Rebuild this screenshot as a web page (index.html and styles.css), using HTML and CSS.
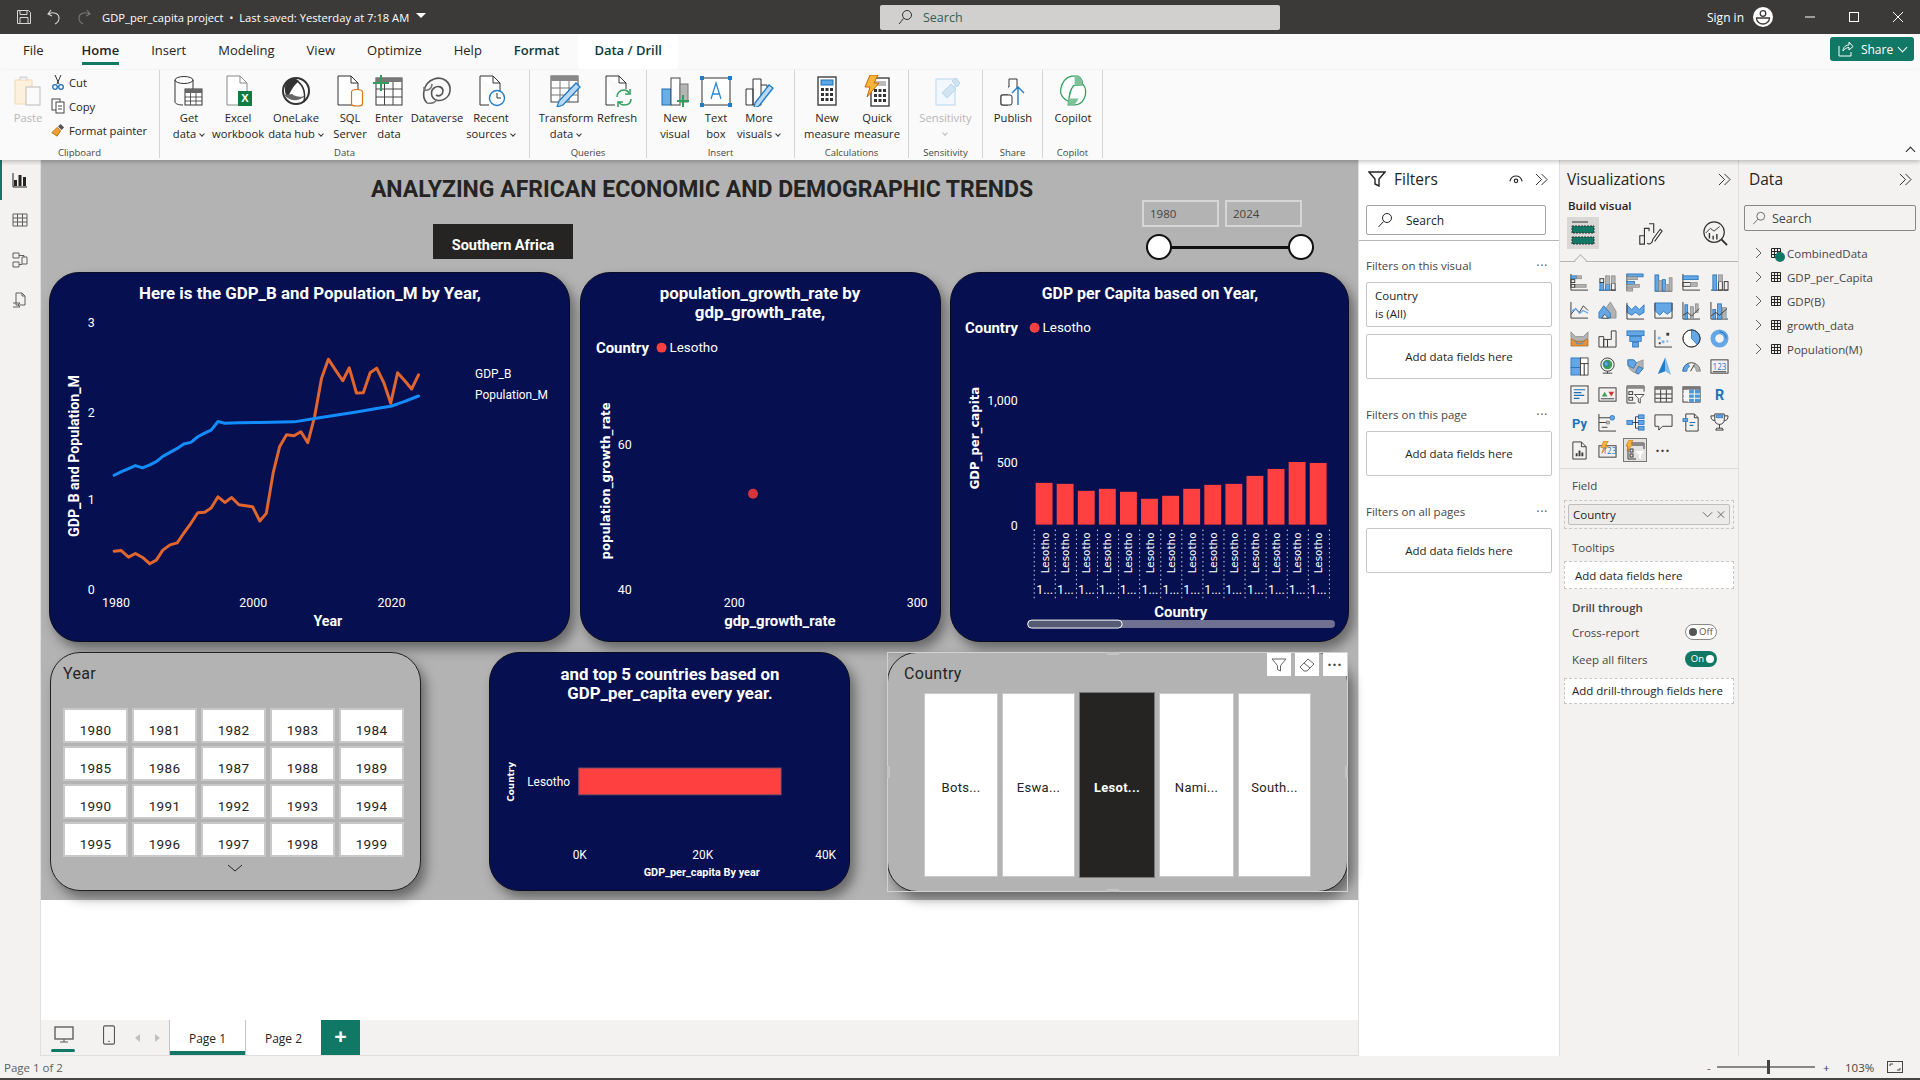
FILE: index.html
```html
<!DOCTYPE html>
<html lang="en">
<head>
<meta charset="utf-8">
<title>GDP_per_capita project</title>
<link rel="stylesheet" href="styles.css">
</head>
<body>
<div class="app">
<header class="titlebar">
  <svg class="tb-ic" viewBox="0 0 16 16"><path d="M1.5 1.5h11l2 2v11h-13z M4 1.5v4h7v-4 M4 14.5v-6h8v6" fill="none" stroke="#d8d6d4"/></svg>
  <svg class="tb-ic" viewBox="0 0 16 16"><path d="M5 1L2 5l4 2 M2.5 5C7 2.5 13 4 13 9c0 3-2 5-4 6" fill="none" stroke="#d8d6d4" stroke-width="1.1"/></svg>
  <svg class="tb-ic" viewBox="0 0 16 16"><path d="M11 1l3 4-4 2 M13.500 5C9 2.500 3 4 3 9c0 3 2 5 4 6" fill="none" stroke="#7a7876" stroke-width="1.1"/></svg>
  <span class="doc-name">GDP_per_capita project &nbsp;•&nbsp; Last saved: Yesterday at 7:18 AM</span>
  <span class="doc-caret"></span>
  <div class="tb-search">
    <svg class="tb-search-ic" viewBox="0 0 16 16"><circle cx="10" cy="6" r="4.500" fill="none" stroke="#333"/><path d="M6.500 9.500L2 15" stroke="#333"/></svg>
    <span>Search</span>
  </div>
  <span class="signin">Sign in</span>
  <svg class="avatar" viewBox="0 0 20 20"><circle cx="10" cy="10" r="10" fill="#fff"/><circle cx="10" cy="6.500" r="2.800" fill="none" stroke="#3b3a39" stroke-width="1.300"/><path d="M3.500 11h13c0 3.500-3 6-6.500 6s-6.500-2.500-6.500-6z" fill="none" stroke="#3b3a39" stroke-width="1.300"/></svg>
  <svg class="win-ic" viewBox="0 0 12 12"><path d="M1 6h10" stroke="#fff"/></svg>
  <svg class="win-ic" viewBox="0 0 12 12"><rect x="1.500" y="1.500" width="9" height="9" fill="none" stroke="#fff"/></svg>
  <svg class="win-ic" viewBox="0 0 12 12"><path d="M1 1l10 10M11 1L1 11" stroke="#fff"/></svg>
</header>

<nav class="tabs">
  <span class="tab tab-file">File</span>
  <span class="tab tab-active">Home</span>
  <span class="tab">Insert</span>
  <span class="tab">Modeling</span>
  <span class="tab">View</span>
  <span class="tab">Optimize</span>
  <span class="tab">Help</span>
  <span class="tab tab-ctx">Format</span>
  <span class="tab tab-ctx tab-white">Data / Drill</span>
  <button class="share">
    <svg class="share-ic" viewBox="0 0 16 16"><path d="M1 5v10h12v-4" fill="none" stroke="#fff"/><path d="M5 10c0-4 3-6 6-6V1l4 4.500L11 9V6.500C8.500 6.500 6 8 5 10z" fill="none" stroke="#fff"/></svg>
    Share <span class="cv-white"></span>
  </button>
</nav>

<section class="ribbon">
  <div class="grp g-clip">
    <div class="grp-body">
      <div class="rb rb-paste">
        <svg class="rb-ic" viewBox="0 0 32 32"><path d="M3 5h17v24H3z" fill="#fdf1dd" stroke="#f0d8b0"/><path d="M8 5V2h7v3" fill="#eee" stroke="#ccc"/><rect x="14" y="12" width="14" height="18" fill="#fafafa" stroke="#bbb"/></svg>
        <span class="rb-t dim">Paste</span>
      </div>
      <div class="clip-list">
        <div class="clip-item"><svg class="clip-ic" viewBox="0 0 14 16"><path d="M4 1l4 9M10 1L6 10" stroke="#333"/><circle cx="4" cy="13" r="2.300" fill="none" stroke="#1e6eb5" stroke-width="1.300"/><circle cx="10" cy="13" r="2.300" fill="none" stroke="#1e6eb5" stroke-width="1.300"/></svg>Cut</div>
        <div class="clip-item"><svg class="clip-ic" viewBox="0 0 14 16"><rect x="1" y="1" width="8" height="11" fill="#fff" stroke="#444"/><rect x="5" y="4" width="8" height="11" fill="#fff" stroke="#444"/><path d="M7 8h4M7 11h4" stroke="#444"/></svg>Copy</div>
        <div class="clip-item"><svg class="clip-ic" viewBox="0 0 16 16"><path d="M1 11l6-6 4 4-4 6z" fill="#f0a030" stroke="#b06a10"/><path d="M8 4l3-3 4 4-3 3z" fill="#555"/></svg>Format painter</div>
      </div>
    </div>
    <div class="grp-name">Clipboard</div>
  </div>

  <div class="grp g-data">
    <div class="grp-body">
      <div class="rb w50">
        <svg class="rb-ic" viewBox="0 0 32 32"><ellipse cx="11" cy="5" rx="9" ry="3.500" fill="#fff" stroke="#333"/><path d="M2 5v22c0 1.500 3 3 8 3" fill="none" stroke="#333"/><path d="M20 5v9" stroke="#333"/><rect x="12" y="14" width="17" height="16" fill="#fff" stroke="#333"/><rect x="12" y="14" width="17" height="4" fill="#666"/><path d="M17.500 18v12M23 18v12M12 22h17M12 26h17" stroke="#333" stroke-width=".8"/></svg>
        <span class="rb-t">Get<br>data<i class="cv"></i></span>
      </div>
      <div class="rb w48">
        <svg class="rb-ic" viewBox="0 0 32 32"><path d="M5 1h13l7 7v22H5z" fill="#fff" stroke="#888"/><path d="M18 1v7h7" fill="none" stroke="#888"/><rect x="16" y="16" width="14" height="15" fill="#107c41"/><text class="x-t" x="23" y="27" text-anchor="middle">X</text></svg>
        <span class="rb-t">Excel<br>workbook</span>
      </div>
      <div class="rb w68">
        <svg class="rb-ic" viewBox="0 0 32 32"><circle cx="16" cy="16" r="13" fill="#fff" stroke="#333" stroke-width="2"/><path d="M7 6c-3 4-3 13 1 17 2-6 5-12 11-17-4-3-9-3-12 0z" fill="#333"/><path d="M4 20c6 6 14 8 22 0-4 3-10 2-14-1z" fill="#666"/><path d="M14 4c8 4 12 12 10 23" fill="none" stroke="#333" stroke-width="1.500"/></svg>
        <span class="rb-t">OneLake<br>data hub<i class="cv"></i></span>
      </div>
      <div class="rb w40">
        <svg class="rb-ic" viewBox="0 0 32 32"><path d="M4 1h13l7 7v22H4z" fill="#fff" stroke="#333"/><path d="M17 1v7h7" fill="none" stroke="#333"/><ellipse cx="23" cy="17" rx="5.500" ry="2.500" fill="#fff" stroke="#d8730f" stroke-width="1.200"/><path d="M17.500 17v12c0 1 2 2 5.500 2s5.500-1 5.500-2V17" fill="#fff" stroke="#d8730f" stroke-width="1.200"/></svg>
        <span class="rb-t">SQL<br>Server</span>
      </div>
      <div class="rb w38">
        <svg class="rb-ic" viewBox="0 0 32 32"><rect x="3" y="3" width="26" height="27" fill="#fff" stroke="#333"/><rect x="3" y="3" width="26" height="4" fill="#777"/><path d="M11.500 7v23M20 7v23M3 14h26M3 22h26" stroke="#444"/><path d="M8 0v16M0 8h16" stroke="#2f9e5a" stroke-width="2"/></svg>
        <span class="rb-t">Enter<br>data</span>
      </div>
      <div class="rb w58">
        <svg class="rb-ic" viewBox="0 0 32 32"><path d="M6 28C0 22 2 8 13 4c9-3 17 3 16 12-1 7-8 11-14 9-5-2-6-9-2-12 4-3 9-1 9 3s-4 6-7 4" fill="none" stroke="#555" stroke-width="1.600"/><path d="M6 28c5 1 10-1 9-4M3 12c-1 6 8 3 8-3" fill="none" stroke="#777" stroke-width="1.600"/></svg>
        <span class="rb-t">Dataverse</span>
      </div>
      <div class="rb w50">
        <svg class="rb-ic" viewBox="0 0 32 32"><path d="M5 1h13l7 7v14M14 30H5V1" fill="#fff" stroke="#333"/><path d="M18 1v7h7" fill="none" stroke="#333"/><circle cx="22" cy="23" r="7.500" fill="#fff" stroke="#1e7cc8" stroke-width="1.400"/><path d="M22 18v5h4" fill="none" stroke="#333"/></svg>
        <span class="rb-t">Recent<br>sources<i class="cv"></i></span>
      </div>
    </div>
    <div class="grp-name">Data</div>
  </div>

  <div class="grp g-query">
    <div class="grp-body">
      <div class="rb w64">
        <svg class="rb-ic" viewBox="0 0 32 32"><rect x="1" y="1" width="27" height="26" fill="#fff" stroke="#444"/><rect x="1" y="1" width="27" height="5" fill="#888"/><path d="M10 6v21M19 6v21M1 13h27M1 20h27" stroke="#777"/><path d="M9 26L26 8l4 4L13 30l-6 2z" fill="#b8d8f4" stroke="#1e7cc8" stroke-width="1.300"/></svg>
        <span class="rb-t">Transform<br>data<i class="cv"></i></span>
      </div>
      <div class="rb w38">
        <svg class="rb-ic" viewBox="0 0 32 32"><path d="M5 1h13l7 7v6M14 30H5V1" fill="#fff" stroke="#333"/><path d="M18 1v7h7" fill="none" stroke="#333"/><path d="M16 22c0-4 3-7 7-7 2 0 4 1 5 3M30 24c0 4-3 6-7 6-2 0-4-1-5-3" fill="none" stroke="#2f9e5a" stroke-width="1.500"/><path d="M29 14v5h-5M17 32v-5h5" fill="none" stroke="#2f9e5a" stroke-width="1.500"/></svg>
        <span class="rb-t">Refresh</span>
      </div>
    </div>
    <div class="grp-name">Queries</div>
  </div>

  <div class="grp g-insert">
    <div class="grp-body">
      <div class="rb w44">
        <svg class="rb-ic" viewBox="0 0 32 32"><rect x="3" y="14" width="9" height="16" fill="#6aaee8" stroke="#1e6eb5"/><rect x="12" y="3" width="9" height="27" fill="#fff" stroke="#444"/><rect x="21" y="9" width="8" height="18" fill="#b5b5b5" stroke="#777"/><path d="M24 20v12M18 26h12" stroke="#2f9e5a" stroke-width="2"/></svg>
        <span class="rb-t">New<br>visual</span>
      </div>
      <div class="rb w38">
        <svg class="rb-ic" viewBox="0 0 32 32"><rect x="2" y="3" width="28" height="27" fill="#fff" stroke="#333"/><path d="M11 24L16 8l5 16M12.500 19h7" fill="none" stroke="#2d8ad8" stroke-width="1.300"/><g fill="#1e7cc8"><rect y="1" width="4" height="4"/><rect x="28" y="1" width="4" height="4"/><rect y="28" width="4" height="4"/><rect x="28" y="28" width="4" height="4"/></g></svg>
        <span class="rb-t">Text<br>box</span>
      </div>
      <div class="rb w48">
        <svg class="rb-ic" viewBox="0 0 32 32"><path d="M3 14h7v16H3zM10 4h8v26h-8zM18 10h6v4" fill="#fff" stroke="#333"/><path d="M12 28L26 10l4 3L16 31l-5 2z" fill="#b8d8f4" stroke="#1e7cc8" stroke-width="1.300"/></svg>
        <span class="rb-t">More<br>visuals<i class="cv"></i></span>
      </div>
    </div>
    <div class="grp-name">Insert</div>
  </div>

  <div class="grp g-calc">
    <div class="grp-body">
      <div class="rb w56">
        <svg class="rb-ic" viewBox="0 0 32 32"><rect x="7" y="2" width="18" height="28" fill="#fff" stroke="#333" stroke-width="1.300"/><rect x="10" y="5" width="12" height="5" fill="#5aa7e6" stroke="#1e6eb5"/><g fill="#333"><rect x="10" y="13" width="3" height="3"/><rect x="14.500" y="13" width="3" height="3"/><rect x="19" y="13" width="3" height="3"/><rect x="10" y="18" width="3" height="3"/><rect x="14.500" y="18" width="3" height="3"/><rect x="19" y="18" width="3" height="3"/><rect x="10" y="23" width="3" height="3"/><rect x="14.500" y="23" width="3" height="3"/><rect x="19" y="23" width="3" height="3"/></g></svg>
        <span class="rb-t">New<br>measure</span>
      </div>
      <div class="rb w44">
        <svg class="rb-ic" viewBox="0 0 32 32"><rect x="10" y="3" width="18" height="28" fill="#fff" stroke="#333" stroke-width="1.300"/><rect x="13" y="6" width="12" height="5" fill="#bbb"/><g fill="#333"><rect x="13" y="14" width="3" height="3"/><rect x="17.500" y="14" width="3" height="3"/><rect x="22" y="14" width="3" height="3"/><rect x="13" y="19" width="3" height="3"/><rect x="17.500" y="19" width="3" height="3"/><rect x="22" y="19" width="3" height="3"/><rect x="13" y="24" width="3" height="3"/><rect x="17.500" y="24" width="3" height="3"/><rect x="22" y="24" width="3" height="3"/></g><path d="M9 0h8l-4 8h5L6 22l3-10H4z" fill="#f5b53a" stroke="#c8650a"/></svg>
        <span class="rb-t">Quick<br>measure</span>
      </div>
    </div>
    <div class="grp-name">Calculations</div>
  </div>

  <div class="grp g-sens">
    <div class="grp-body">
      <div class="rb w74">
        <svg class="rb-ic" viewBox="0 0 32 32"><rect x="6" y="4" width="19" height="26" fill="#f2f8fd" stroke="#b5d8f0"/><path d="M12 18l9-9 5 5-9 9z" fill="#d0e4f2" stroke="#b5d8f0"/><path d="M22 6l4-3 4 5-3 4z" fill="#d0e4f2" stroke="#b5d8f0"/></svg>
        <span class="rb-t dim">Sensitivity<br><i class="cv cv-center"></i></span>
      </div>
    </div>
    <div class="grp-name">Sensitivity</div>
  </div>

  <div class="grp g-share">
    <div class="grp-body">
      <div class="rb w60">
        <svg class="rb-ic" viewBox="0 0 32 32"><path d="M4 20h7v10H4zM11 12h1V4h8v10" fill="#fff" stroke="#333"/><rect x="4" y="20" width="11" height="10" rx="2" fill="#fff" stroke="#333"/><path d="M21 30V12M15 18l6-6 6 6" fill="none" stroke="#1e7cc8" stroke-width="1.400"/></svg>
        <span class="rb-t">Publish</span>
      </div>
    </div>
    <div class="grp-name">Share</div>
  </div>

  <div class="grp g-copilot">
    <div class="grp-body">
      <div class="rb w60">
        <svg class="rb-ic" viewBox="2 1 27 30"><path d="M4 14C5 8 9 3 14 2h6c4 2 5 6 4 9l-8 1c-3 4-4 8-4 14C6 24 3 19 4 14z" fill="#fff" stroke="#2f9e5a" stroke-width="1.200"/><path d="M16 11l9-1c3 3 3 9 1 13-2 4-5 6-9 6h-6c1-8 1-13 5-18z" fill="#fff" stroke="#2f9e5a" stroke-width="1.200"/><path d="M17 2h3c4 2 5 6 4 9l-7 0z" fill="#7fc19a"/><path d="M11 23h10l-4 6h-6z" fill="#7fc19a"/></svg>
        <span class="rb-t">Copilot</span>
      </div>
    </div>
    <div class="grp-name">Copilot</div>
  </div>
  <span class="collapse"></span>
</section>

<div class="main">
  <aside class="rail">
    <div class="rail-item rail-on"><svg class="rail-ic" viewBox="0 0 16 16"><rect x="2" y="8" width="3" height="6" fill="#252423"/><rect x="6.500" y="3" width="3" height="11" fill="#252423"/><rect x="11" y="5" width="3" height="9" fill="#252423"/><path d="M1 1v14h14" fill="none" stroke="#252423"/></svg></div>
    <div class="rail-item"><svg class="rail-ic" viewBox="0 0 16 16"><path d="M1 2h14v12H1zM1 6h14M1 10h14M5.500 2v12M10.500 2v12" fill="none" stroke="#605e5c"/></svg></div>
    <div class="rail-item"><svg class="rail-ic" viewBox="0 0 16 16"><path d="M1 1h6v5H1zM1 10h6v5H1zM10 5h5v7h-5zM7 3.500h5V5M7 12.500h3" fill="none" stroke="#605e5c"/></svg></div>
    <div class="rail-item"><svg class="rail-ic" viewBox="0 0 16 16"><path d="M4 1h6l3 3v9H4zM10 1v3h3" fill="none" stroke="#605e5c"/><path d="M1 11h7l-2 2 2 2H1" fill="none" stroke="#605e5c"/></svg></div>
  </aside>

  <div class="workspace">
    <div class="canvas">
      <div class="canvas-head">
        <h1 class="report-title">ANALYZING AFRICAN ECONOMIC AND DEMOGRAPHIC TRENDS</h1>
        <div class="region-btn">Southern Africa</div>
        <div class="range">
          <div class="range-inputs"><span class="range-in">1980</span><span class="range-in">2024</span></div>
          <div class="range-track"><span class="handle"></span><span class="handle"></span></div>
        </div>
      </div>

      <div class="row row-top">
        <div class="card c-line">
          <svg class="chart" viewBox="49 272 521 370">
            <text class="t-title" x="310" y="292" text-anchor="middle">Here is the GDP_B and Population_M by Year,</text>
            <text class="t-ax" x="90" y="322" text-anchor="middle">3</text>
            <text class="t-ax" x="90" y="412" text-anchor="middle">2</text>
            <text class="t-ax" x="90" y="500" text-anchor="middle">1</text>
            <text class="t-ax" x="90" y="590" text-anchor="middle">0</text>
            <text class="t-ax" x="115" y="603" text-anchor="middle">1980</text>
            <text class="t-ax" x="253" y="603" text-anchor="middle">2000</text>
            <text class="t-ax" x="392" y="603" text-anchor="middle">2020</text>
            <text class="t-axt" x="328" y="622" text-anchor="middle">Year</text>
            <text class="t-axt" text-anchor="middle" transform="translate(73 456) rotate(-90)">GDP_B and Population_M</text>
            <text class="t-ax t-lg" x="476" y="374">GDP_B</text>
            <text class="t-ax t-lg" x="476" y="395">Population_M</text>
            <svg x="49" y="272" width="521" height="370" viewBox="26 37 1512 1110" preserveAspectRatio="none">
              <polyline class="ln ln-or" vector-effect="non-scaling-stroke" points="212,876 232,874 254,894 274,883 295,895 316,914 335,903 354,873 375,857 396,851 415,822 436,792 456,760 476,759 495,746 515,712 535,729 555,714 576,736 596,739 616,742 637,785 656,762 676,640 695,560 715,525 737,528 757,516 777,549 797,470 817,355 837,297 858,330 879,362 898,323 919,399 939,398 959,338 978,324 999,368 1019,430 1039,338 1060,362 1080,387 1100,344"/>
              <polyline class="ln ln-bl" vector-effect="non-scaling-stroke" points="212,647 232,637 254,627 274,618 295,625 316,616 335,606 354,590 375,578 396,566 415,553 436,548 456,531 476,520 495,511 515,485 535,490 576,489 637,488 737,486 797,476 858,466 919,456 978,446 1019,439 1039,432 1060,424 1100,408"/>
            </svg>
          </svg>
        </div>

        <div class="card c-scatter">
          <svg class="chart" viewBox="580 272 361 370">
            <text class="t-title" x="760" y="292" text-anchor="middle">population_growth_rate by</text>
            <text class="t-title" x="760" y="311" text-anchor="middle">gdp_growth_rate,</text>
            <text class="t-leg-h" x="595" y="347">Country</text>
            <circle class="dot" cx="661" cy="347" r="5"/>
            <text class="t-leg" x="669" y="347">Lesotho</text>
            <text class="t-wide" text-anchor="middle" transform="translate(605 481) rotate(-90)">population_growth_rate</text>
            <text class="t-ax" x="617" y="444">60</text>
            <text class="t-ax" x="617" y="590">40</text>
            <text class="t-ax" x="734" y="603" text-anchor="middle">200</text>
            <text class="t-ax" x="918" y="603" text-anchor="middle">300</text>
            <circle class="dot dot-data" cx="753" cy="494" r="5"/>
            <text class="t-leg-h" x="780" y="622" text-anchor="middle">gdp_growth_rate</text>
          </svg>
        </div>

        <div class="card c-bars">
          <svg class="chart" viewBox="950 272 399 370">
            <text class="t-title t-title-sm" x="1150" y="293" text-anchor="middle">GDP per Capita based on Year,</text>
            <text class="t-leg-h" x="964" y="327">Country</text>
            <circle class="dot" cx="1034" cy="327" r="5"/>
            <text class="t-leg" x="1042" y="327">Lesotho</text>
            <text class="t-wide" text-anchor="middle" transform="translate(974 438) rotate(-90)">GDP_per_capita</text>
            <text class="t-ax" x="1017" y="400" text-anchor="end">1,000</text>
            <text class="t-ax" x="1017" y="463" text-anchor="end">500</text>
            <text class="t-ax" x="1017" y="526" text-anchor="end">0</text>
            <g class="bars">
              <rect x="1035" y="483" width="17" height="42"/><rect x="1056.200" y="484" width="17" height="41"/><rect x="1077.400" y="491" width="17" height="34"/><rect x="1098.600" y="489" width="17" height="36"/><rect x="1119.800" y="492" width="17" height="33"/><rect x="1141" y="499" width="17" height="26"/><rect x="1162.200" y="496" width="17" height="29"/><rect x="1183.400" y="489" width="17" height="36"/><rect x="1204.600" y="485" width="17" height="40"/><rect x="1225.800" y="484" width="17" height="41"/><rect x="1247" y="476" width="17" height="49"/><rect x="1268.200" y="469" width="17" height="56"/><rect x="1289.400" y="462" width="17" height="63"/><rect x="1310.600" y="463" width="17" height="62"/>
            </g>
            <g class="seps">
              <path d="M1033.600 530V600M1054.800 530V600M1076 530V600M1097.200 530V600M1118.400 530V600M1139.600 530V600M1160.800 530V600M1182 530V600M1203.200 530V600M1224.400 530V600M1245.600 530V600M1266.800 530V600M1288 530V600M1309.200 530V600M1330.400 530V600"/>
            </g>
            <g class="t-cat">
              <text transform="translate(1044 574) rotate(-90)">Lesotho</text><text transform="translate(1065 574) rotate(-90)">Lesotho</text><text transform="translate(1086 574) rotate(-90)">Lesotho</text><text transform="translate(1107 574) rotate(-90)">Lesotho</text><text transform="translate(1128 574) rotate(-90)">Lesotho</text><text transform="translate(1150 574) rotate(-90)">Lesotho</text><text transform="translate(1171 574) rotate(-90)">Lesotho</text><text transform="translate(1192 574) rotate(-90)">Lesotho</text><text transform="translate(1213 574) rotate(-90)">Lesotho</text><text transform="translate(1234 574) rotate(-90)">Lesotho</text><text transform="translate(1256 574) rotate(-90)">Lesotho</text><text transform="translate(1277 574) rotate(-90)">Lesotho</text><text transform="translate(1298 574) rotate(-90)">Lesotho</text><text transform="translate(1319 574) rotate(-90)">Lesotho</text>
            </g>
            <g class="t-ax t-mid">
              <text x="1044" y="590">1...</text><text x="1065" y="590">1...</text><text x="1086" y="590">1...</text><text x="1107" y="590">1...</text><text x="1128" y="590">1...</text><text x="1150" y="590">1...</text><text x="1171" y="590">1...</text><text x="1192" y="590">1...</text><text x="1213" y="590">1...</text><text x="1234" y="590">1...</text><text x="1256" y="590">1...</text><text x="1277" y="590">1...</text><text x="1298" y="590">1...</text><text x="1319" y="590">1...</text>
            </g>
            <text class="t-leg-h" x="1181" y="613" text-anchor="middle">Country</text>
            <rect class="sb-track" x="1027" y="621" width="309" height="8" rx="4"/>
            <rect class="sb-thumb" x="1027" y="621" width="95" height="8" rx="4"/>
          </svg>
        </div>
      </div>

      <div class="row row-bottom">
        <div class="slicer s-year">
          <div class="slicer-title">Year</div>
          <div class="year-grid">
            <span class="yr">1980</span><span class="yr">1981</span><span class="yr">1982</span><span class="yr">1983</span><span class="yr">1984</span>
            <span class="yr">1985</span><span class="yr">1986</span><span class="yr">1987</span><span class="yr">1988</span><span class="yr">1989</span>
            <span class="yr">1990</span><span class="yr">1991</span><span class="yr">1992</span><span class="yr">1993</span><span class="yr">1994</span>
            <span class="yr">1995</span><span class="yr">1996</span><span class="yr">1997</span><span class="yr">1998</span><span class="yr">1999</span>
          </div>
          <svg class="yr-more" viewBox="0 0 16 8"><path d="M1 1l7 6 7-6" fill="none" stroke="#252423"/></svg>
        </div>

        <div class="card c-top5">
          <svg class="chart" viewBox="489 652 361 239">
            <text class="t-title" x="670" y="673" text-anchor="middle">and top 5 countries based on</text>
            <text class="t-title" x="670" y="692" text-anchor="middle">GDP_per_capita every year.</text>
            <text class="t-wide-sm" text-anchor="middle" transform="translate(510 782) rotate(-90)">Country</text>
            <text class="t-ax-sm" x="526" y="782">Lesotho</text>
            <rect class="bar-top" x="578" y="768" width="204" height="27"/>
            <text class="t-ax-sm" x="579" y="856" text-anchor="middle">0K</text>
            <text class="t-ax-sm" x="703" y="856" text-anchor="middle">20K</text>
            <text class="t-ax-sm" x="827" y="856" text-anchor="middle">40K</text>
            <text class="t-sub" x="702" y="873" text-anchor="middle">GDP_per_capita By year</text>
          </svg>
        </div>

        <div class="slicer s-country">
          <div class="slicer-title st-country">Country</div>
          <div class="country-grid">
            <span class="cb">Bots...</span><span class="cb">Eswa...</span><span class="cb cb-on">Lesot...</span><span class="cb">Nami...</span><span class="cb">South...</span>
          </div>
          <div class="sel-frame">
            <i class="grip g-t"></i><i class="grip g-b"></i><i class="grip g-l"></i><i class="grip g-r"></i>
          </div>
          <div class="vis-tools">
            <span class="vt"><svg class="vt-ic" viewBox="0 0 16 16"><path d="M1 2h14l-5.500 6.500V14L6.500 12.500V8.500z" fill="none" stroke="#666"/></svg></span>
            <span class="vt"><svg class="vt-ic" viewBox="0 0 16 16"><path d="M1 10l8-8 6 5-7 7H5z" fill="none" stroke="#666"/><path d="M5 6l6 5" stroke="#666"/></svg></span>
            <span class="vt vt-dots">···</span>
          </div>
        </div>
      </div>
    </div>

    <div class="blank"></div>

    <div class="pagebar">
      <span class="pb-view pb-view-on"><svg class="pb-ic" viewBox="0 0 20 18"><rect x="1" y="1" width="18" height="12" fill="none" stroke="#555" stroke-width="1.300"/><path d="M10 13v3M6 16h8" stroke="#555"/></svg></span>
      <span class="pb-view"><svg class="pb-ic" viewBox="0 0 14 22"><rect x="1" y="1" width="12" height="20" rx="1.500" fill="none" stroke="#555" stroke-width="1.200"/><path d="M6 18h2" stroke="#555"/></svg></span>
      <span class="pb-arrow pb-left"></span>
      <span class="pb-arrow pb-right"></span>
      <span class="page page-on">Page 1</span>
      <span class="page">Page 2</span>
      <span class="page-add">+</span>
    </div>
  </div>

  <aside class="filters">
    <div class="pane-head">
      <svg class="pane-f" viewBox="0 0 18 16"><path d="M1 1h16l-6 7v7l-4-2V8z" fill="none" stroke="#252423" stroke-width="1.400"/></svg>
      <span class="pane-title">Filters</span>
      <svg class="eye" viewBox="0 0 16 10"><path d="M1 7c2-8 12-8 14 0" fill="none" stroke="#252423" stroke-width="1.300"/><circle cx="8" cy="6.500" r="2" fill="none" stroke="#252423" stroke-width="1.300"/></svg>
      <svg class="dbl" viewBox="0 0 14 14"><path d="M1 1l6 6-6 6M7 1l6 6-6 6" fill="none" stroke="#252423"/></svg>
    </div>
    <div class="f-search">
      <svg class="s-ic" viewBox="0 0 16 16"><circle cx="10" cy="6" r="4.500" fill="none" stroke="#252423"/><path d="M6.500 9.500L1.500 15" stroke="#252423"/></svg>
      <span>Search</span>
    </div>
    <div class="f-rule"></div>
    <div class="f-section">
      <div class="f-head"><span>Filters on this visual</span><span class="f-dots">···</span></div>
      <div class="f-card"><span>Country</span><span>is (All)</span></div>
      <div class="f-add">Add data fields here</div>
    </div>
    <div class="f-section">
      <div class="f-head"><span>Filters on this page</span><span class="f-dots">···</span></div>
      <div class="f-add">Add data fields here</div>
    </div>
    <div class="f-section">
      <div class="f-head"><span>Filters on all pages</span><span class="f-dots">···</span></div>
      <div class="f-add">Add data fields here</div>
    </div>
  </aside>

  <aside class="viz">
    <div class="viz-head">
      <span class="pane-title">Visualizations</span>
      <svg class="dbl" viewBox="0 0 14 14"><path d="M1 1l6 6-6 6M7 1l6 6-6 6" fill="none" stroke="#252423"/></svg>
    </div>
    <div class="build">Build visual</div>
    <div class="viz-tabs">
      <span class="vtab-on"><svg class="vtab-ic" viewBox="0 0 28 28"><path d="M3 3h16" stroke="#333"/><rect x="3" y="7" width="22" height="7" fill="#117865" stroke="#333" stroke-dasharray="2 1"/><rect x="3" y="18" width="22" height="7" fill="#117865" stroke="#333" stroke-dasharray="2 1"/></svg></span>
      <svg class="vtab-2" viewBox="0 0 28 28"><path d="M3 17h5v9H3zM8 17V9h5v3M13 4h5v10" fill="none" stroke="#333" stroke-width="1.200"/><path d="M11 25c3 2 6-1 6-4L25 10l2 2-8 11" fill="#fff" stroke="#333" stroke-width="1.200"/></svg>
      <svg class="vtab-3" viewBox="0 0 28 28"><circle cx="13" cy="13" r="11" fill="none" stroke="#333" stroke-width="1.300"/><path d="M4 14l5-5 4 3 6-5" fill="none" stroke="#333"/><path d="M8 20v-6M12 21v-4M16 21v-6" stroke="#333" stroke-width="1.500"/><path d="M21 21l6 6" stroke="#333" stroke-width="2"/></svg>
    </div>
    <div class="viz-rule"><i class="notch"></i></div>
    <div class="viz-grid">
      <svg class="vi" viewBox="0 0 20 20"><path class="l" d="M1 1v17h18"/><rect class="b" x="1" y="3" width="6" height="3"/><rect class="g" x="7" y="3" width="5" height="3"/><rect class="l" x="1" y="7" width="4" height="3"/><rect class="g" x="5" y="12" width="12" height="3"/><rect class="l" x="1" y="12" width="4" height="3"/></svg>
      <svg class="vi" viewBox="0 0 20 20"><path class="l" d="M1 18h18"/><rect class="b" x="2" y="10" width="4" height="8"/><rect class="l" x="2" y="6" width="4" height="4"/><rect class="b" x="8" y="12" width="4" height="6"/><rect class="g" x="8" y="3" width="4" height="9"/><rect class="l" x="14" y="11" width="4" height="7"/><rect class="g" x="14" y="3" width="4" height="8"/></svg>
      <svg class="vi" viewBox="0 0 20 20"><path class="l" d="M1 1v18"/><rect class="b" x="1" y="1" width="17" height="3"/><rect class="g" x="1" y="4" width="11" height="3"/><rect class="b" x="1" y="9" width="8" height="3"/><rect class="g" x="1" y="12" width="13" height="3"/><rect class="g" x="1" y="16" width="6" height="3"/></svg>
      <svg class="vi" viewBox="0 0 20 20"><path class="l" d="M1 19h18"/><rect class="b" x="1" y="2" width="4" height="17"/><rect class="g" x="5" y="8" width="3" height="11"/><rect class="b" x="9" y="7" width="3" height="12"/><rect class="g" x="12" y="12" width="3" height="7"/><rect class="g" x="16" y="5" width="3" height="14"/></svg>
      <svg class="vi" viewBox="0 0 20 20"><path class="l" d="M1 1v17h18"/><rect class="b" x="1" y="3" width="16" height="4"/><rect class="l" x="1" y="10" width="8" height="4"/><rect class="g" x="9" y="10" width="7" height="4"/></svg>
      <svg class="vi" viewBox="0 0 20 20"><path class="l" d="M1 18h18"/><rect class="b" x="3" y="2" width="4" height="16"/><rect class="l" x="9" y="9" width="4" height="9"/><rect class="g" x="9" y="2" width="4" height="7"/><rect class="l" x="15" y="9" width="4" height="9"/></svg>

      <svg class="vi" viewBox="0 0 20 20"><path class="l" d="M1 1v17h18M1 14l5-6 4 4 4-7 5 5"/><path class="bl" d="M1 11l5-3 4 5 4-3 5 3"/></svg>
      <svg class="vi" viewBox="0 0 20 20"><path class="g" d="M8 8l5-7 6 10v7H8z"/><path class="b" d="M1 12l5-7 7 8v5H1z"/><path class="w" d="M4 18l3-4 4 4z"/></svg>
      <svg class="vi" viewBox="0 0 20 20"><path class="b" d="M1 4l5 5 4-4 4 4 5-5v8l-5 3-4-3-4 3-5-3z"/><path class="l" d="M1 2v17h18"/></svg>
      <svg class="vi" viewBox="0 0 20 20"><path class="b" d="M1 2h18v8l-5 4-4-3-4 4-5-5z"/><path class="l" d="M1 2v16h18V2"/></svg>
      <svg class="vi" viewBox="0 0 20 20"><path class="l" d="M1 1v18h18"/><rect class="b" x="3" y="4" width="3" height="15"/><rect class="g" x="9" y="6" width="3" height="13"/><rect class="g" x="14" y="3" width="3" height="9"/><path class="l" d="M1 15l5-3 4 4 8-8"/></svg>
      <svg class="vi" viewBox="0 0 20 20"><path class="l" d="M1 1v18h18"/><rect class="b" x="3" y="9" width="3" height="10"/><rect class="b" x="8" y="3" width="4" height="16"/><rect class="g" x="13" y="7" width="4" height="12"/><path class="l" d="M1 16l5-4 4 3 8-7"/></svg>

      <svg class="vi" viewBox="0 0 20 20"><path class="g" d="M1 3l5 5 8 0 5-5v6l-5 4H7L1 9z"/><path class="o" d="M1 10l5 3h8l5-3v8H1z"/><path class="b2" d="M5 12l3 3 4 0 3-3-2 4H7z"/></svg>
      <svg class="vi" viewBox="0 0 20 20"><path class="l" d="M1 19V8h5v11M6 19v-8h4v8M10 19V11h4V2h5v17M1 19h18"/></svg>
      <svg class="vi" viewBox="0 0 20 20"><rect class="b" x="1" y="2" width="18" height="5"/><rect class="b" x="4" y="8" width="12" height="5"/><rect class="b" x="7" y="14" width="6" height="5"/></svg>
      <svg class="vi" viewBox="0 0 20 20"><path class="l" d="M1 1v18h18"/><g class="sq"><rect class="bs" x="4" y="8" width="3" height="3"/><rect class="bs" x="8" y="12" width="3" height="3"/><rect class="ds" x="13" y="4" width="3" height="3"/><rect class="bs" x="13" y="12" width="2" height="2"/><rect class="ds" x="5" y="14" width="2" height="2"/></g></svg>
      <svg class="vi" viewBox="0 0 20 20"><circle class="w" cx="10" cy="10" r="9"/><path class="b" d="M10 10V1a9 9 0 0 1 6 15.500z"/><circle class="l" cx="10" cy="10" r="9"/></svg>
      <svg class="vi" viewBox="0 0 20 20"><circle class="rb1" cx="10" cy="10" r="7"/><path class="rb2" d="M10 3a7 7 0 0 1 7 7"/></svg>

      <svg class="vi" viewBox="0 0 20 20"><rect class="b" x="1" y="1" width="10" height="10"/><rect class="b" x="1" y="11" width="10" height="8"/><rect class="w" x="11" y="1" width="8" height="6"/><rect class="w" x="11" y="7" width="4" height="12"/><rect class="w" x="15" y="7" width="4" height="12"/></svg>
      <svg class="vi" viewBox="0 0 20 20"><circle class="l" cx="10" cy="8" r="7"/><circle cx="10" cy="8" r="5" fill="#3f9d5b"/><path class="b" d="M6 6l4-2 1 5-3 1z"/><path class="l" d="M5 17h10M10 15v2"/></svg>
      <svg class="vi" viewBox="0 0 20 20"><path class="g" d="M2 3h6l3 3 7-3v9l-5 6-5-2-4-3-2-5z"/><path class="b" d="M2 3h6l3 3-3 6-6-3zM10 16l3-6 5 2-5 6z"/></svg>
      <svg class="vi" viewBox="0 0 20 20"><path d="M12 0L4 18l8-3z" fill="#1e7cc8"/><path d="M12 0l6 19-6-4z" fill="#7fbbe9"/></svg>
      <svg class="vi" viewBox="0 0 20 20"><path class="l" d="M1 15a9 9 0 0 1 18 0"/><path class="b" d="M1 15a9 9 0 0 1 5-8l2 3a5 5 0 0 0-3 5z"/><path class="g" d="M14 7a9 9 0 0 1 5 8h-4a5 5 0 0 0-3-5z"/><path class="l" d="M9 15l4-7"/></svg>
      <svg class="vi" viewBox="0 0 20 20"><rect class="l" x="1" y="3" width="18" height="14"/><text class="n123" x="10" y="14" text-anchor="middle">123</text><path class="l" d="M3 15.500h14"/></svg>

      <svg class="vi" viewBox="0 0 20 20"><rect class="l" x="1" y="1" width="18" height="18"/><path class="hb" d="M4 5h12M4 8h8M4 11h11M4 14h6"/></svg>
      <svg class="vi" viewBox="0 0 20 20"><rect class="l" x="1" y="3" width="18" height="14"/><path d="M4 12l3-5 3 5z" fill="#3f9d5b"/><path d="M11 7h6l-3 5z" fill="#d13438"/><path class="l" d="M3 14.500h14"/></svg>
      <svg class="vi" viewBox="0 0 20 20"><path class="l" d="M1 1h18v6M1 1v18h9"/><rect x="1" y="1" width="18" height="3" fill="#888"/><rect class="l" x="3" y="7" width="4" height="3"/><rect class="l" x="3" y="13" width="4" height="3"/><path class="w l2" d="M9 10h10l-4 4v5l-2-1v-4z"/></svg>
      <svg class="vi" viewBox="0 0 20 20"><rect class="l" x="1" y="2" width="18" height="16"/><rect x="1" y="2" width="18" height="3" fill="#777"/><path class="l" d="M7 5v13M13 5v13M1 9.500h18M1 14h18"/></svg>
      <svg class="vi" viewBox="0 0 20 20"><rect class="l" x="1" y="2" width="18" height="16"/><rect x="1" y="2" width="18" height="3" fill="#777"/><rect x="7" y="5" width="12" height="13" fill="#4f95d8"/><path class="w2" d="M7 5v13M13 5v13M1 9.500h18M1 14h18"/></svg>
      <svg class="vi" viewBox="0 0 20 20"><text class="big-r" x="10" y="16" text-anchor="middle">R</text></svg>

      <svg class="vi" viewBox="0 0 22 20"><text class="big-py" x="11" y="16" text-anchor="middle">Py</text></svg>
      <svg class="vi" viewBox="0 0 20 20"><path class="l" d="M1 1v18h18M1 5h12M1 10h8M4 15h6"/><circle class="b" cx="15" cy="5" r="2.500"/><rect class="g" x="9" y="8.500" width="3" height="3"/></svg>
      <svg class="vi" viewBox="0 0 20 20"><rect class="b" x="1" y="8" width="6" height="4"/><rect class="b" x="13" y="2" width="6" height="4"/><rect class="b" x="13" y="8" width="6" height="4"/><rect class="b" x="13" y="14" width="6" height="4"/><path class="l" d="M7 10h6M10 4v12M10 4h3M10 16h3"/></svg>
      <svg class="vi" viewBox="0 0 20 20"><path class="l" d="M1 2h18v12H9l-4 4v-4H1z"/></svg>
      <svg class="vi" viewBox="0 0 20 20"><path class="l" d="M4 1h9l4 4v14H4zM13 1v4h4"/><rect class="b" x="1" y="6" width="5" height="3"/><path class="hb" d="M8 10h6M8 13h4"/></svg>
      <svg class="vi" viewBox="0 0 20 20"><path class="l" d="M5 1h10v6c0 3-2 5-5 5S5 10 5 7zM5 3H1c0 3 1 5 4 5M15 3h4c0 3-1 5-4 5M10 12v4M6 18h8l-1-2H7z"/><rect class="b" x="7" y="2" width="6" height="3"/></svg>

      <svg class="vi" viewBox="0 0 20 20"><path class="l" d="M3 1h9l5 5v13H3zM12 1v5h5"/><path class="dk" d="M6 16v-3h2v3zM9 16v-6h2v6zM12 16v-4h2v4z"/></svg>
      <svg class="vi" viewBox="0 0 20 20"><rect class="l" x="1" y="5" width="18" height="12"/><path class="bo" d="M6 0h5L8 5h3L4 13l2-6H3z"/><text class="n123" x="12" y="14" text-anchor="middle">123</text></svg>
      <span class="vi-sel"><svg class="vi-in" viewBox="0 0 20 20"><path class="l" d="M3 3h16v6M3 3v16h8"/><rect x="3" y="3" width="16" height="3" fill="#888"/><rect class="l" x="5" y="9" width="3" height="3"/><rect class="l" x="5" y="14" width="3" height="3"/><path class="w l2" d="M10 11h9l-3 4v4l-2-1v-3z"/><path class="bo" d="M4 0h4L6 4h2L2 11l1-5H1z"/></svg></span>
      <span class="vi-more">···</span>
    </div>
    <div class="viz-rule2"></div>
    <div class="v-label v-field">Field</div>
    <div class="well well-field">
      <div class="chip"><span>Country</span>
        <svg class="chip-ic" viewBox="0 0 26 10"><path d="M1 2l5 5 5-5M17 1l7 7M24 1l-7 7" fill="none" stroke="#605e5c"/></svg>
      </div>
    </div>
    <div class="v-label v-tool">Tooltips</div>
    <div class="well well-add">Add data fields here</div>
    <div class="v-label v-drill">Drill through</div>
    <div class="tog-row tr-1"><span>Cross-report</span><span class="tog tog-off"><i></i>Off</span></div>
    <div class="tog-row tr-2"><span>Keep all filters</span><span class="tog tog-on">On<i></i></span></div>
    <div class="well well-drill">Add drill-through fields here</div>
  </aside>

  <aside class="data">
    <div class="viz-head data-head">
      <span class="pane-title">Data</span>
      <svg class="dbl" viewBox="0 0 14 14"><path d="M1 1l6 6-6 6M7 1l6 6-6 6" fill="none" stroke="#252423"/></svg>
    </div>
    <div class="d-search">
      <svg class="s-ic2" viewBox="0 0 16 16"><circle cx="10" cy="6" r="4.500" fill="none" stroke="#605e5c"/><path d="M6.500 9.500L1.500 15" stroke="#605e5c"/></svg>
      <span>Search</span>
    </div>
    <ul class="tree">
      <li class="tree-row"><svg class="tw" viewBox="0 0 8 12"><path d="M1 1l5 5-5 5" fill="none" stroke="#605e5c"/></svg><span class="tbl-wrap"><svg class="tbl" viewBox="0 0 12 12"><path d="M1.500 1.500h9v9h-9zM1.500 4.500h9M1.500 7.500h9M4.500 1.500v9M7.500 1.500v9" fill="none" stroke="#252423"/></svg><span class="tbl-chk"></span></span>CombinedData</li>
      <li class="tree-row"><svg class="tw" viewBox="0 0 8 12"><path d="M1 1l5 5-5 5" fill="none" stroke="#605e5c"/></svg><span class="tbl-wrap"><svg class="tbl" viewBox="0 0 12 12"><path d="M1.500 1.500h9v9h-9zM1.500 4.500h9M1.500 7.500h9M4.500 1.500v9M7.500 1.500v9" fill="none" stroke="#252423"/></svg></span>GDP_per_Capita</li>
      <li class="tree-row"><svg class="tw" viewBox="0 0 8 12"><path d="M1 1l5 5-5 5" fill="none" stroke="#605e5c"/></svg><span class="tbl-wrap"><svg class="tbl" viewBox="0 0 12 12"><path d="M1.500 1.500h9v9h-9zM1.500 4.500h9M1.500 7.500h9M4.500 1.500v9M7.500 1.500v9" fill="none" stroke="#252423"/></svg></span>GDP(B)</li>
      <li class="tree-row"><svg class="tw" viewBox="0 0 8 12"><path d="M1 1l5 5-5 5" fill="none" stroke="#605e5c"/></svg><span class="tbl-wrap"><svg class="tbl" viewBox="0 0 12 12"><path d="M1.500 1.500h9v9h-9zM1.500 4.500h9M1.500 7.500h9M4.500 1.500v9M7.500 1.500v9" fill="none" stroke="#252423"/></svg></span>growth_data</li>
      <li class="tree-row"><svg class="tw" viewBox="0 0 8 12"><path d="M1 1l5 5-5 5" fill="none" stroke="#605e5c"/></svg><span class="tbl-wrap"><svg class="tbl" viewBox="0 0 12 12"><path d="M1.500 1.500h9v9h-9zM1.500 4.500h9M1.500 7.500h9M4.500 1.500v9M7.500 1.500v9" fill="none" stroke="#252423"/></svg></span>Population(M)</li>
    </ul>
  </aside>
</div>

<footer class="status">
  <span class="st-page">Page 1 of 2</span>
  <span class="st-minus">-</span>
  <span class="st-slider"><i></i></span>
  <span class="st-plus">+</span>
  <span class="st-zoom">103%</span>
  <svg class="st-fit" viewBox="0 0 16 12"><rect x=".5" y=".5" width="15" height="11" fill="none" stroke="#444"/><path d="M3 5V3h3M13 7v2h-3" fill="none" stroke="#444"/></svg>
</footer>
</div>
</body>
</html>
```

FILE: styles.css
```css
*{box-sizing:border-box}
html,body{margin:0;padding:0;width:1920px;height:1080px;overflow:hidden;background:#f3f2f1}
body{font-family:"Open Sans","Noto Sans",sans-serif;color:#252423;font-size:11.500px}
.app{display:flex;flex-direction:column;width:1920px;height:1080px}

/* title bar */
.titlebar{height:34px;background:#3b3a39;display:flex;align-items:center;color:#fff;flex:none;padding-left:16px}
.tb-ic{width:16px;height:16px;margin-right:14px;flex:none}
.doc-name{font-size:11.200px;margin-left:-4px;white-space:nowrap;width:316px}
.doc-caret{width:0;height:0;border-left:5px solid transparent;border-right:5px solid transparent;border-top:5px solid #fff;margin:-4px 0 0 -2px}
.tb-search{width:400px;height:25px;background:#d2d0ce;border-radius:2px;margin-left:454px;display:flex;align-items:center;padding-left:17px;color:#2f5e58;font-size:12.500px;flex:none}
.tb-search-ic{width:16px;height:16px;margin-right:10px}
.signin{margin-left:427px;font-size:12px}
.avatar{width:20px;height:20px;margin-left:9px}
.win-ic{width:12px;height:12px;margin-left:32px}
.avatar + .win-ic{margin-left:31px}

/* tabs */
.tabs{height:36px;background:#fafafa;display:flex;align-items:center;padding-left:7px;flex:none;font-size:13px;position:relative}
.tab{padding:0 16px;height:36px;line-height:32px;color:#252423;white-space:nowrap}
.tab-file{margin-right:6px}
.tab-active{font-weight:600;position:relative;padding:0;margin:0 16px}
.tab-active::after{content:"";display:block;position:absolute;left:0;right:0;top:28px;height:3px;background:#117865}
.tab-ctx{color:#0d3b38;font-weight:600}
.tab-white{background:#fff;margin-left:3px}
.share{margin-left:auto;margin-right:6px;width:84px;height:24px;background:#117865;border:0;border-radius:3px;color:#fff;font:12px "Open Sans",sans-serif;display:flex;align-items:center;justify-content:center;gap:7px;margin-top:-6px}
.share-ic{width:16px;height:16px}
.cv-white{width:7px;height:7px;border-right:1px solid #fff;border-bottom:1px solid #fff;transform:rotate(45deg);margin:-4px 0 0 -1px}

/* ribbon */
.ribbon{height:90px;background:#fafafa;display:flex;flex:none;position:relative;z-index:2;box-shadow:0 2px 4px rgba(0,0,0,.22)}
.grp{height:88px;border-right:1px solid #d4d4d4;display:flex;flex-direction:column;flex:none;padding-top:5px}
.grp-body{height:71px;display:flex}
.grp-name{height:14px;line-height:18px;text-align:center;font-size:9.500px;color:#484644}
.g-clip{width:160px}
.g-data{width:370px}.g-data .grp-body,.g-query .grp-body,.g-calc .grp-body{padding-left:4px}
.g-query{width:117px}
.g-insert{width:148px}.g-insert .grp-body{padding-left:6px}
.g-calc{width:114px}
.g-sens{width:74px}
.g-share{width:60px}
.g-copilot{width:60px}
.rb{display:flex;flex-direction:column;align-items:center;flex:none;white-space:nowrap}
.w38{width:38px}.w40{width:40px}.w44{width:44px}.w48{width:48px}.w50{width:50px}.w56{width:56px}.w58{width:58px}.w60{width:60px}.w64{width:64px}.w68{width:68px}.w74{width:73px}
.rb-paste{width:48px;margin-left:4px}
.rb-ic{width:32px;height:32px;flex:none}
.rb-t{font-size:11.200px;line-height:16px;text-align:center;margin-top:3px;color:#252423}
.dim{color:#b8b6b4}
.cv{display:inline-block;width:4px;height:4px;border-right:1px solid #333;border-bottom:1px solid #333;transform:rotate(45deg);margin:0 1px 2px 4px}
.cv-center{margin:0 0 3px;border-color:#b8b6b4}
.x-t{font:700 11px "Liberation Sans",sans-serif;fill:#fff}
.clip-list{display:flex;flex-direction:column;margin-top:-5px}
.clip-item{height:24px;display:flex;align-items:center;white-space:nowrap;gap:4px;font-size:11.200px}
.clip-ic{width:14px;height:16px;flex:none;margin-left:-1px}
.collapse{position:absolute;left:1907px;top:78px;width:7px;height:7px;border-left:1.500px solid #252423;border-top:1.500px solid #252423;transform:rotate(45deg)}

/* main */
.main{flex:1;display:flex;min-height:0}
.rail{width:41px;background:#f3f2f1;flex:none;display:flex;flex-direction:column;border-right:1px solid #e1dfdd}
.rail-item{height:40px;display:flex;align-items:center;justify-content:center}
.rail-on{box-shadow:inset 2px 0 0 #117865}
.rail-ic{width:16px;height:16px}
.workspace{width:1317px;flex:none;display:flex;flex-direction:column;background:#fff}
.canvas{height:740px;background:#b3b3b3;flex:none}
.canvas-head{height:112px;display:grid;grid-template-columns:392px 140px 1fr;grid-template-rows:40px auto;align-content:start}
.report-title{grid-column:1/-1;margin:18px 0 0;font:700 23px/24px Roboto,sans-serif;text-align:center;color:#252423;padding-left:5px;white-space:nowrap}
.region-btn{grid-column:2;margin-top:24px;height:35px;background:#252423;color:#fff;font:700 14.500px/44px Roboto,sans-serif;text-align:center}
.range{grid-column:3;margin-left:569px;width:175px}
.range-inputs{display:flex;gap:6px}
.range-in{width:77px;height:27px;border:2px solid #d6d6d6;font:11.500px/23px "Open Sans",sans-serif;padding-left:6px;color:#444}
.range-track{margin:7px 0 0 4px;height:26px;width:168px;display:flex;justify-content:space-between;background:linear-gradient(#111,#111) center/100% 3px no-repeat}
.handle{width:26px;height:26px;border-radius:50%;background:#fff;border:2.500px solid #111}

.row{display:flex}
.row-top{height:370px;padding-left:8px;gap:9px}
.row-bottom{height:239px;margin-top:10px;padding-left:9px}
.card{background:#060f4f;border:1px solid #0c0c20;border-radius:30px;box-shadow:5px 7px 12px rgba(0,0,0,.42);overflow:hidden;flex:none}
.c-line{width:521px;margin-right:1px}
.c-scatter{width:361px}
.c-bars{width:399px}
.c-top5{width:361px;margin-left:68px}
.chart{display:block;width:100%;height:100%}
.chart text{dominant-baseline:central;fill:#fff}
.t-title{font:700 17px Roboto,sans-serif}
.t-title-sm{font-size:16px}
.t-ax{font:400 12.500px Roboto,sans-serif}
.t-lg{font-size:12px}
.t-leg{font:400 13.500px Roboto,sans-serif}
.t-leg-h{font:700 15px Roboto,sans-serif}
.t-mid text{text-anchor:middle}
.t-axt{font:700 14.300px Roboto,sans-serif}
.t-wide{font:700 11.800px "DejaVu Sans",sans-serif}
.t-wide-sm{font:700 9px "DejaVu Sans",sans-serif}
.t-ax-sm{font:400 12px Roboto,sans-serif}
.t-sub{font:700 11px Roboto,sans-serif}
.t-cat text{font:400 10.500px "DejaVu Sans",sans-serif}
.ln{fill:none;stroke-width:3;stroke-linejoin:round;stroke-linecap:round}
.ln-or{stroke:#e0662e}
.ln-bl{stroke:#118dff}
.dot{fill:#ff4040}
.dot-data{fill:#d8343c}
.bars rect{fill:#ff4040}
.bar-top{fill:#ff4040;stroke:#77506a;stroke-width:1}
.seps path{stroke:#d8d8e8;stroke-width:1;stroke-dasharray:1.500 3;fill:none}
.sb-track{fill:#707090}
.sb-thumb{fill:#555a75;stroke:#fff;stroke-width:1}

/* slicers */
.slicer{background:#b3b3b3;border:1px solid #222;border-radius:30px;box-shadow:5px 7px 12px rgba(0,0,0,.42);flex:none;position:relative}
.slicer-title{font:400 16px/22px Roboto,sans-serif;color:#252423;letter-spacing:.3px}
.s-year{width:371px;height:239px;padding:10px 0 0 12px}
.year-grid{display:grid;grid-template-columns:repeat(5,65px);grid-auto-rows:35px;gap:3px 4px;margin-top:23px}
.yr{background:#fff;border:2px solid #c8c8c8;font:400 13.500px/1 Roboto,sans-serif;color:#252423;text-align:center;padding-top:14px;letter-spacing:.3px}
.yr-more{display:block;width:16px;height:8px;margin:7px 0 0 164px}
.s-country{width:461px;height:240px;margin-left:37px;padding:10px 0 0 36px}
.st-country{margin-left:-20px}
.country-grid{display:grid;grid-template-columns:74px 73px 76px 75px 73px;gap:4px;margin-top:7px;height:186px}
.cb{background:#fff;border:1px solid #c8c8c8;display:flex;align-items:center;justify-content:center;font:400 13px Roboto,sans-serif;letter-spacing:.3px;color:#252423;margin:1px 0;padding-top:4px}
.cb-on{background:#252423;color:#fff;font-weight:700;border-color:#777;margin:0}
.sel-frame{position:absolute;inset:-1px;border:1px solid #d2d2d2;border-radius:0}
.grip{position:absolute;background:#c4c4c4}
.g-t{top:-1px;left:219px;width:12px;height:3px}
.g-b{bottom:-1px;left:219px;width:12px;height:3px}
.g-l{left:-1px;top:113px;width:3px;height:12px}
.g-r{right:-1px;top:113px;width:3px;height:12px}
.vis-tools{position:absolute;right:0;top:0;display:flex;gap:4px}
.vt{width:24px;height:23px;background:#fff;display:flex;align-items:center;justify-content:center}
.vt-ic{width:16px;height:16px}
.vt-dots{font-size:14px;font-weight:700;letter-spacing:1px;color:#444}

.blank{flex:1;background:#fff}
.pagebar{height:36px;background:#f3f2f1;flex:none;display:flex;align-items:stretch;border-bottom:1px solid #e1dfdd}
.pb-view{width:45px;display:flex;align-items:center;justify-content:center;position:relative;padding-bottom:5px}
.pb-view-on::after{content:"";position:absolute;bottom:3px;left:10px;width:24px;height:3px;border-radius:2px;background:#117865}
.pb-ic{height:20px;width:20px}
.pb-arrow{width:0;height:0;border-top:4px solid transparent;border-bottom:4px solid transparent;align-self:center}
.pb-left{border-right:5px solid #c0c0c0;margin-left:4px}
.pb-right{border-left:5px solid #c0c0c0;margin-left:15px;margin-right:9px}
.page{width:76px;background:#fff;text-align:center;line-height:38px;font-size:12px;border-left:1px solid #c8c6c4}
.page-on{box-shadow:inset 0 -4px 0 #117865}
.page-add{width:39px;background:#117865;color:#fff;text-align:center;font:700 22px/30px "Open Sans",sans-serif}

/* filters */
.filters{width:201px;background:#fff;flex:none;border-left:1px solid #e1dfdd}
.pane-head{height:40px;display:flex;align-items:center;padding:0 0 2px 9px}
.pane-f{width:18px;height:16px;margin-right:8px}
.pane-title{font-size:15.500px;font-weight:500;color:#252423}
.eye{width:14px;height:9px;margin-left:71px}
.dbl{width:13px;height:13px;margin-left:auto;margin-right:7px}
.eye + .dbl{margin-left:12px;margin-right:0}
.f-search{margin:5px 0 0 7px;width:180px;height:30px;border:1px solid #a8a6a4;border-radius:2px;display:flex;align-items:center;padding-left:10px;font-size:12px}
.s-ic{width:16px;height:16px;margin-right:13px}
.f-rule{height:1px;background:#b8b6b4;margin-top:5px}
.f-section{padding:14px 7px 0;margin-bottom:11px}
.f-head{height:20px;display:flex;justify-content:space-between;align-items:center;color:#484644;font-size:11.500px}
.f-dots{font-size:13px;letter-spacing:.5px;color:#605e5c;margin-right:4px}
.f-card{margin-top:7px;height:45px;border:1px solid #c8c6c4;border-radius:2px;display:flex;flex-direction:column;justify-content:center;padding-left:8px;font-size:11.500px;line-height:18px}
.f-add{margin-top:7px;height:45px;border:1px solid #c8c6c4;border-radius:2px;display:flex;align-items:center;justify-content:center;font-size:11.500px}

/* viz */
.viz{width:180px;background:#f3f2f1;flex:none;border-left:1px solid #e1dfdd;border-right:1px solid #e1dfdd}
.viz-head{height:38px;display:flex;align-items:center;padding-left:7px}
.build{height:16px;line-height:16px;padding-left:8px;font-weight:600;font-size:11.500px}
.viz-tabs{height:32px;margin-top:3px;display:flex;align-items:center;padding-left:7px}
.vtab-on{width:32px;height:32px;background:#d9d8d6;display:flex;align-items:center;justify-content:center}
.vtab-ic{width:28px;height:28px}
.vtab-2{width:26px;height:26px;margin-left:38px}
.vtab-3{width:26px;height:26px;margin-left:39px}
.viz-rule{height:1px;background:#b8b6b4;margin-top:12px;position:relative}
.notch{position:absolute;left:16px;top:-5px;width:9px;height:9px;background:#f3f2f1;border-left:1px solid #b8b6b4;border-top:1px solid #b8b6b4;transform:rotate(45deg)}
.viz-grid{display:grid;grid-template-columns:repeat(6,28px);grid-auto-rows:28px;margin:6px 0 0 5px;height:196px;align-items:center;justify-items:center}
.vi{width:19px;height:19px}
.vi .l{fill:none;stroke:#3b3a39;stroke-width:1}
.vi .b{fill:#64a6e6;stroke:#1e6eb5;stroke-width:.8}
.vi .g{fill:#b3b3b3;stroke:#8a8a8a;stroke-width:.8}
.vi .w{fill:#fff;stroke:#3b3a39;stroke-width:.9}
.vi .l2{stroke:#3b3a39}
.vi .bl{fill:none;stroke:#64a6e6;stroke-width:1.200}
.vi .o{fill:#e8913a;stroke:#8a5a20;stroke-width:.6}
.vi .b2{fill:#4c8fd0}
.vi .bs{fill:#7fb7ea}
.vi .ds{fill:#3b3a39}
.vi .rb1{fill:none;stroke:#64a6e6;stroke-width:5}
.vi .rb2{fill:none;stroke:#1e6eb5;stroke-width:1}
.vi .hb{fill:none;stroke:#1e6eb5;stroke-width:1.300}
.vi .w2{fill:none;stroke:#fff;stroke-width:1}
.vi .dk{fill:#3b3a39}
.n123{font:400 8.500px "Open Sans",sans-serif;fill:#1e7cc8}
.big-r{font:700 15px Roboto,sans-serif;fill:#1e72b8}
.big-py{font:700 15px Roboto,sans-serif;fill:#1e72b8}
.bo{fill:#f5b53a;stroke:#c8650a;stroke-width:.6}
.vi-sel{width:24px;height:24px;border:1px solid #777;background:#e3e2e0;display:flex;align-items:center;justify-content:center}
.vi-in{width:20px;height:20px}
.vi-in .l{fill:none;stroke:#3b3a39}
.vi-in .w{fill:#fff}
.vi-more{font-size:14px;font-weight:700;letter-spacing:1px;color:#444}
.viz-rule2{height:1px;background:#dcdad8;margin-top:4px}
.v-label{height:16px;line-height:16px;padding-left:12px;color:#484644;font-size:11.500px}
.v-field{margin-top:9px}
.well{margin-left:4px;width:170px;border:1px dashed #c8c6c4}
.well-field{margin-top:6px;height:29px;padding:3px}
.chip{height:21px;background:#edebe9;border:1px solid #c0bebc;border-radius:2px;display:flex;align-items:center;justify-content:space-between;padding:0 3px 0 4px}
.chip-ic{width:24px;height:10px}
.v-tool{margin-top:11px}
.well-add{margin-top:5px;height:28px;background:#fff;line-height:28px;padding-left:10px}
.v-drill{margin-top:11px;font-weight:600}
.tog-row{height:16px;display:flex;justify-content:space-between;align-items:center;padding:0 21px 0 12px;color:#484644}
.tr-1{margin-top:8px}
.tr-2{margin-top:11px}
.tog{width:32px;height:16px;border-radius:8px;font-size:9.500px;display:flex;align-items:center;gap:2px;padding:0 3px;line-height:1}
.tog i{width:8px;height:8px;border-radius:50%;flex:none}
.tog-off{border:1px solid #888;background:#fff;color:#555}
.tog-off i{background:#555}
.tog-on{background:#117865;color:#fff;justify-content:flex-end}
.tog-on i{background:#fff}
.well-drill{margin-top:11px;height:26px;background:#fff;line-height:24px;padding-left:7px;white-space:nowrap}

/* data */
.data{flex:1;background:#f3f2f1}
.data-head{height:40px;padding:0 0 2px 10px}
.data-head .dbl{margin-right:8px}
.d-search{margin:5px 0 0 5px;width:172px;height:26px;border:1px solid #8a8886;border-radius:2px;display:flex;align-items:center;padding-left:7px;font-size:12.500px;color:#484644}
.s-ic2{width:14px;height:14px;margin-right:6px}
.tree{list-style:none;margin:10px 0 0;padding:0}
.tree-row{height:24px;display:flex;align-items:center;padding-left:16px;font-size:11.500px;color:#484644}
.tw{width:8px;height:12px;margin-right:7px}
.tbl-wrap{position:relative;width:17px;height:12px}
.tbl{width:12px;height:12px;display:block}
.tbl-chk{position:absolute;left:5px;top:5px;width:10px;height:10px;border-radius:50%;background:#117865}

/* status */
.status{height:24px;background:#f3f2f1;flex:none;display:flex;align-items:center;border-bottom:2px solid #444;color:#605e5c;font-size:11.500px;padding-left:4px}
.st-page{width:1703px;flex:none}
.st-minus{width:10px;flex:none}
.st-slider{width:98px;height:2px;background:#8a8886;position:relative;margin-right:8px;flex:none}
.st-slider i{position:absolute;left:50px;top:-6px;width:3px;height:14px;background:#444}
.st-plus{width:22px;color:#333;flex:none}
.st-zoom{width:42px;color:#444;flex:none}
.st-fit{width:16px;height:12px;flex:none}
```
